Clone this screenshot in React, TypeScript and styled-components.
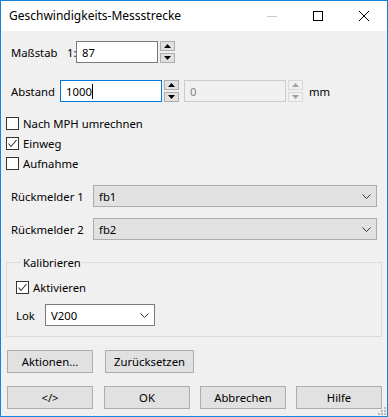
import React from 'react';
import styled, { createGlobalStyle } from 'styled-components';

const GlobalStyle = createGlobalStyle`
  html, body {
    margin: 0;
    padding: 0;
    background: #ffffff;
  }
  * {
    box-sizing: border-box;
  }
`;

const Window = styled.div`
  width: 388px;
  height: 417px;
  border: 1px solid #1883d7;
  background: #f0f0f0;
  display: flex;
  flex-direction: column;
  font-family: 'Noto Sans', 'Liberation Sans', sans-serif;
  font-size: 11.3px;
  color: #000;
  position: relative;
`;

const TitleBar = styled.div`
  height: 30px;
  background: #ffffff;
  display: flex;
  align-items: center;
  padding-left: 8px;
`;

const Title = styled.span`
  flex: 1;
  font-size: 12px;
  padding-bottom: 2px;
`;

const CaptionButton = styled.div`
  width: 46px;
  height: 30px;
  display: flex;
  align-items: center;
  justify-content: center;
`;

const Body = styled.div`
  flex: 1;
  display: flex;
  flex-direction: column;
  padding: 10px 5px 0 5px;
`;

const Row = styled.div<{ $mt?: number; $indent?: number }>`
  display: flex;
  align-items: center;
  margin-top: ${(p) => p.$mt ?? 0}px;
  padding-left: ${(p) => p.$indent ?? 0}px;
`;

const Label = styled.span<{ $w?: number }>`
  width: ${(p) => (p.$w ? `${p.$w}px` : 'auto')};
  white-space: nowrap;
`;

const TextBox = styled.div<{ $w: number; $focus?: boolean; $disabled?: boolean }>`
  width: ${(p) => p.$w}px;
  height: 22px;
  border: 1px solid
    ${(p) => (p.$focus ? '#0078d7' : p.$disabled ? '#cccccc' : '#7a7a7a')};
  background: ${(p) => (p.$disabled ? '#f0f0f0' : '#ffffff')};
  color: ${(p) => (p.$disabled ? '#838383' : '#000')};
  display: flex;
  align-items: center;
  padding-left: 5px;
`;

const Caret = styled.span`
  display: inline-block;
  width: 1px;
  height: 15px;
  background: #000;
`;

const Spin = styled.div`
  display: flex;
  flex-direction: column;
  gap: 2px;
  margin-left: 2px;
`;

const SpinButton = styled.div<{ $disabled?: boolean }>`
  width: 15px;
  height: 10px;
  border: 1px solid ${(p) => (p.$disabled ? '#d9d9d9' : '#adadad')};
  background: ${(p) => (p.$disabled ? '#f0f0f0' : '#e1e1e1')};
  display: flex;
  align-items: center;
  justify-content: center;
`;

const CheckRow = styled.label<{ $mt?: number }>`
  display: flex;
  align-items: center;
  gap: 4px;
  height: 13px;
  margin-top: ${(p) => p.$mt ?? 0}px;
`;

const Box = styled.span`
  width: 13px;
  height: 13px;
  border: 1px solid #333333;
  background: #ffffff;
  display: flex;
  align-items: center;
  justify-content: center;
`;

const Combo = styled.div<{ $w: number; $white?: boolean }>`
  width: ${(p) => p.$w}px;
  height: 22px;
  border: 1px solid ${(p) => (p.$white ? '#7a7a7a' : '#adadad')};
  background: ${(p) => (p.$white ? '#ffffff' : '#e1e1e1')};
  display: flex;
  align-items: center;
  justify-content: space-between;
  padding: 0 5px 0 5px;
`;

const Group = styled.fieldset`
  margin: 15px 0 0 0;
  padding: 11px 9px 8px 9px;
  border: 1px solid #dcdcdc;
  width: 376px;
  height: 82px;
  display: flex;
  flex-direction: column;
`;

const Legend = styled.legend`
  padding: 0 2px;
  margin-left: 5px;
  font-size: 11.3px;
`;

const ButtonRow = styled.div<{ $mt: number }>`
  display: flex;
  gap: 10px;
  margin-top: ${(p) => p.$mt}px;
  padding-left: 1px;
`;

const Button = styled.div<{ $w?: number }>`
  width: ${(p) => p.$w ?? 86}px;
  height: 23px;
  border: 1px solid #adadad;
  background: #e1e1e1;
  display: flex;
  align-items: center;
  justify-content: center;
  padding-bottom: 1px;
`;

const Grip = styled.svg`
  position: absolute;
  right: 1px;
  bottom: 1px;
`;

const Triangle = ({ up, color }: { up?: boolean; color: string }) => (
  <svg width="7" height="4" viewBox="0 0 7 4">
    <polygon points={up ? '0,4 7,4 3.5,0' : '0,0 7,0 3.5,4'} fill={color} />
  </svg>
);

const Spinner = ({ disabled }: { disabled?: boolean }) => (
  <Spin>
    <SpinButton $disabled={disabled}>
      <Triangle up color={disabled ? '#a0a0a0' : '#000'} />
    </SpinButton>
    <SpinButton $disabled={disabled}>
      <Triangle color={disabled ? '#a0a0a0' : '#000'} />
    </SpinButton>
  </Spin>
);

const Chevron = () => (
  <svg width="9" height="5" viewBox="0 0 9 5">
    <polyline points="0.5,0.5 4.5,4.5 8.5,0.5" fill="none" stroke="#333" strokeWidth="1" />
  </svg>
);

const Check = () => (
  <svg width="11" height="11" viewBox="0 0 11 11">
    <polyline points="1.5,5.5 4,8.5 9.5,2" fill="none" stroke="#333" strokeWidth="1.1" />
  </svg>
);

const CheckBox = ({ label, checked, mt }: { label: string; checked?: boolean; mt?: number }) => (
  <CheckRow $mt={mt}>
    <Box>{checked && <Check />}</Box>
    <span>{label}</span>
  </CheckRow>
);

export default function App() {
  return (
    <>
      <GlobalStyle />
      <Window>
        <TitleBar>
          <Title>Geschwindigkeits-Messstrecke</Title>
          <CaptionButton>
            <svg width="10" height="1" viewBox="0 0 10 1">
              <rect width="10" height="1" fill="#c8c8c8" />
            </svg>
          </CaptionButton>
          <CaptionButton>
            <svg width="10" height="10" viewBox="0 0 10 10">
              <rect x="0.5" y="0.5" width="9" height="9" fill="none" stroke="#000" />
            </svg>
          </CaptionButton>
          <CaptionButton>
            <svg width="10" height="10" viewBox="0 0 10 10">
              <path d="M0 0 L10 10 M10 0 L0 10" stroke="#000" strokeWidth="1" />
            </svg>
          </CaptionButton>
        </TitleBar>
        <Body>
          <Row $indent={5}>
            <Label $w={56}>Maßstab</Label>
            <Label $w={9}>1:</Label>
            <TextBox $w={82}>87</TextBox>
            <Spinner />
          </Row>
          <Row $mt={17} $indent={5}>
            <Label $w={49}>Abstand</Label>
            <TextBox $w={102} $focus>
              1000
              <Caret />
            </TextBox>
            <Spinner />
            <TextBox $w={102} $disabled style={{ marginLeft: 5 }}>
              0
            </TextBox>
            <Spinner disabled />
            <Label style={{ marginLeft: 6 }}>mm</Label>
          </Row>
          <CheckBox label="Nach MPH umrechnen" mt={15} />
          <CheckBox label="Einweg" checked mt={7} />
          <CheckBox label="Aufnahme" mt={7} />
          <Row $mt={15} $indent={5}>
            <Label $w={82}>Rückmelder 1</Label>
            <Combo $w={284}>
              fb1
              <Chevron />
            </Combo>
          </Row>
          <Row $mt={11} $indent={5}>
            <Label $w={82}>Rückmelder 2</Label>
            <Combo $w={284}>
              fb2
              <Chevron />
            </Combo>
          </Row>
          <Group>
            <Legend>Kalibrieren</Legend>
            <CheckBox label="Aktivieren" checked />
            <Row $mt={10}>
              <Label $w={29}>Lok</Label>
              <Combo $w={110} $white>
                V200
                <Chevron />
              </Combo>
            </Row>
          </Group>
          <ButtonRow $mt={13}>
            <Button>Aktionen...</Button>
            <Button $w={89} style={{ marginLeft: 2 }}>
              Zurücksetzen
            </Button>
          </ButtonRow>
          <ButtonRow $mt={13}>
            <Button>&lt;/&gt;</Button>
            <Button style={{ marginLeft: 1 }}>OK</Button>
            <Button>Abbrechen</Button>
            <Button>Hilfe</Button>
          </ButtonRow>
        </Body>
        <Grip width="10" height="10" viewBox="0 0 10 10">
          {[
            [8, 2],
            [8, 5],
            [5, 5],
            [8, 8],
            [5, 8],
            [2, 8],
          ].map(([x, y]) => (
            <rect key={`${x}-${y}`} x={x} y={y} width="2" height="2" fill="#b8b8b8" />
          ))}
        </Grip>
      </Window>
    </>
  );
}
